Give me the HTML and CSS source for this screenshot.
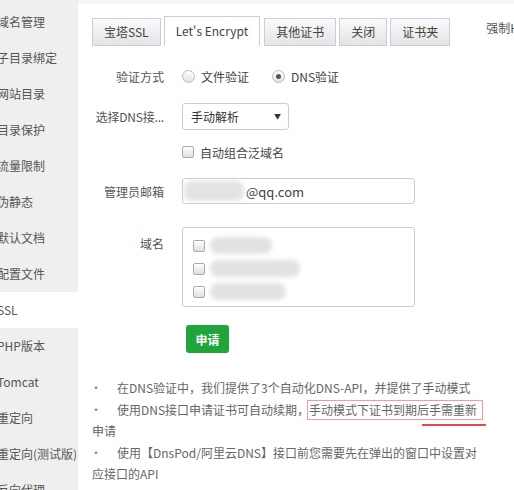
FILE: index.html
```html
<!DOCTYPE html>
<html lang="zh-CN">
<head>
  <meta charset="UTF-8">
  <meta name="viewport" content="width=device-width, initial-scale=1.0">
  <title>SSL</title>
  <link rel="stylesheet" href="styles.css">
</head>
<body>
  <div class="layout">
    <ul class="side">
      <li>域名管理</li>
      <li>子目录绑定</li>
      <li>网站目录</li>
      <li>目录保护</li>
      <li>流量限制</li>
      <li>伪静态</li>
      <li>默认文档</li>
      <li>配置文件</li>
      <li class="active">SSL</li>
      <li>PHP版本</li>
      <li>Tomcat</li>
      <li>重定向</li>
      <li>重定向(测试版)</li>
      <li>反向代理</li>
    </ul>

    <div class="main">
      <div class="tabs">
        <span class="tab">宝塔SSL</span>
        <span class="tab on">Let's Encrypt</span>
        <span class="tab">其他证书</span>
        <span class="tab">关闭</span>
        <span class="tab">证书夹</span>
        <span class="force">强制HTTPS</span>
      </div>

      <div class="form">
        <div class="row row-radio">
          <span class="label">验证方式</span>
          <span class="radio"></span><span class="opt">文件验证</span>
          <span class="radio checked"></span><span class="opt">DNS验证</span>
        </div>
        <div class="row row-select">
          <span class="label">选择DNS接...</span>
          <div class="select">手动解析<span class="arrow">▼</span></div>
        </div>
        <div class="row row-check">
          <span class="label"></span>
          <span class="check"></span><span class="opt">自动组合泛域名</span>
        </div>
        <div class="row row-mail">
          <span class="label">管理员邮箱</span>
          <div class="input"><span class="blur blur-mail"></span>@qq.com</div>
        </div>
        <div class="row row-domain">
          <span class="label">域名</span>
          <div class="domains">
            <div class="dom"><span class="check"></span><span class="blur" style="width: 62px"></span></div>
            <div class="dom"><span class="check"></span><span class="blur" style="width: 90px"></span></div>
            <div class="dom"><span class="check"></span><span class="blur" style="width: 76px"></span></div>
          </div>
        </div>
        <div class="row row-btn">
          <span class="label"></span>
          <button class="btn">申请</button>
        </div>
      </div>

      <ul class="tips">
        <li>在DNS验证中，我们提供了3个自动化DNS-API，并提供了手动模式</li>
        <li>使用DNS接口申请证书可自动续期，<span class="mark">手动模式下证书到期后手需重新</span>申请</li>
        <li>使用【DnsPod/阿里云DNS】接口前您需要先在弹出的窗口中设置对应接口的API</li>
      </ul>
    </div>
  </div>
</body>
</html>
```

FILE: styles.css
```css
html, body {
  margin: 0;
  padding: 0;
}

body {
  width: 514px;
  height: 490px;
  overflow: hidden;
  background: #f6f6f6;
  font-family: "Noto Sans CJK SC", "Liberation Sans", sans-serif;
  font-size: 12px;
  color: #555;
}

.layout {
  display: flex;
  height: 100%;
}

/* 左侧菜单 */
.side {
  width: 78px;
  flex: none;
  margin: 0;
  padding: 4px 0 0;
  list-style: none;
  background: #efefef;
}
.side li {
  height: 36px;
  line-height: 36px;
  white-space: nowrap;
  overflow: hidden;
  text-indent: -3px;
  color: #555;
  font-size: 12px;
}
.side li.active {
  background: #fff;
}

.main {
  flex: 1;
  margin-top: 4px;
  background: #fff;
  overflow: hidden;
}

/* tab 栏 */
.tabs {
  display: flex;
  align-items: flex-end;
  height: 28px;
  margin: 14px 0 0 14px;
  white-space: nowrap;
}
.tab {
  height: 26px;
  line-height: 26px;
  padding: 0 11px;
  margin-right: 3px;
  border: 1px solid #cdcbe0;
  background: linear-gradient(#fafafa, #e4e4e4);
  color: #444;
}
.tab.on {
  height: 28px;
  line-height: 28px;
  margin-right: 4px;
  background: #fff;
  border-bottom-color: #fff;
}
.force {
  align-self: flex-start;
  margin-left: 33px;
  line-height: 20px;
  color: #555;
}

/* 表单 */
.form {
  padding-top: 15px;
}
.row {
  display: flex;
  align-items: center;
}
.label {
  width: 72px;
  margin: 0 18px 0 14px;
  text-align: right;
  white-space: nowrap;
  overflow: hidden;
  color: #555;
  flex: none;
}
.row-radio {
  height: 30px;
}
.row-select {
  height: 27px;
  margin-top: 12px;
}
.row-select .label {
  letter-spacing: -0.2px;
}
.row-check {
  height: 20px;
  margin-top: 12px;
}
.row-mail {
  height: 26px;
  margin-top: 16px;
}
.row-domain {
  align-items: flex-start;
  margin-top: 23px;
}
.row-domain .label {
  margin-top: 8px;
}
.row-btn {
  margin-top: 18px;
}

.radio {
  width: 11px;
  height: 11px;
  margin-right: 6px;
  border: 1px solid #bbb;
  border-radius: 50%;
  background: linear-gradient(#fff, #e2e2e2);
  position: relative;
  flex: none;
}
.radio.checked::after {
  content: "";
  position: absolute;
  left: 3px;
  top: 3px;
  width: 5px;
  height: 5px;
  border-radius: 50%;
  background: #555;
}
.opt {
  margin-right: 23px;
  color: #444;
}
.check {
  width: 10px;
  height: 10px;
  margin-right: 6px;
  border: 1px solid #aaa;
  border-radius: 2px;
  background: linear-gradient(#fff, #dedede);
  flex: none;
}

.select {
  box-sizing: border-box;
  width: 107px;
  height: 27px;
  line-height: 25px;
  padding: 0 8px;
  border: 1px solid #ccc;
  border-radius: 3px;
  color: #333;
  position: relative;
}
.arrow {
  position: absolute;
  right: 7px;
  top: 0;
  font-size: 7px;
  color: #333;
}

.input {
  box-sizing: border-box;
  display: flex;
  align-items: center;
  width: 233px;
  height: 26px;
  border: 1px solid #ccc;
  border-radius: 3px;
  color: #444;
  font-size: 13px;
}

.blur {
  display: inline-block;
  height: 17px;
  border-radius: 8px;
  background: #e2e2e2;
  filter: blur(2px);
}
.blur-mail {
  width: 60px;
  height: 20px;
  margin: 0 2px 0 1px;
  background: #e3e3e3;
}

.domains {
  box-sizing: border-box;
  width: 233px;
  height: 80px;
  padding: 6px 10px;
  border: 1px solid #ccc;
  border-radius: 3px;
}
.dom {
  display: flex;
  align-items: center;
  height: 23px;
}
.dom .check {
  margin-right: 5px;
}

.btn {
  width: 43px;
  height: 28px;
  margin-left: 4px;
  padding: 0;
  border: none;
  border-radius: 3px;
  background: #20a53a;
  color: #fff;
  font-family: inherit;
  font-size: 12px;
  font-weight: bold;
}

/* 说明 */
.tips {
  width: 396px;
  margin: 24px 0 0 14px;
  padding: 0;
  list-style: none;
  line-height: 21.5px;
  color: #666;
}
.tips li::before {
  content: "•";
  display: inline-block;
  width: 25px;
  text-indent: -2px;
  color: #888;
}

/* 标注 */
.mark {
  position: relative;
}
.mark::before {
  content: "";
  position: absolute;
  left: -2px;
  right: -6px;
  top: -1px;
  bottom: -2px;
  border: 1.5px solid #f39a9a;
}
.mark::after {
  content: "";
  position: absolute;
  right: -9px;
  bottom: -8px;
  width: 64px;
  height: 2px;
  background: #e74848;
}
```
